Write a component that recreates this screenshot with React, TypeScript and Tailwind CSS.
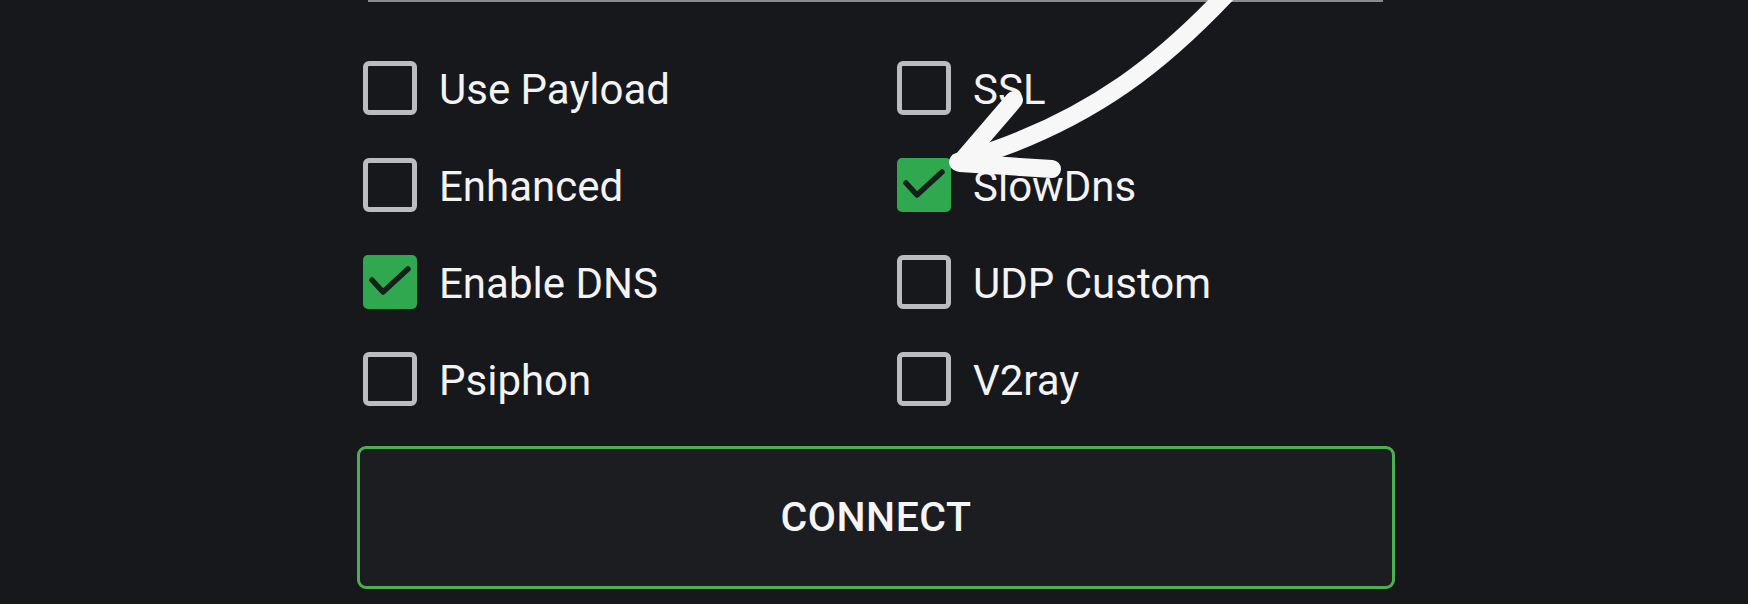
type Option = {
  label: string;
  checked: boolean;
};

const leftOptions: Option[] = [
  { label: "Use Payload", checked: false },
  { label: "Enhanced", checked: false },
  { label: "Enable DNS", checked: true },
  { label: "Psiphon", checked: false },
];

const rightOptions: Option[] = [
  { label: "SSL", checked: false },
  { label: "SlowDns", checked: true },
  { label: "UDP Custom", checked: false },
  { label: "V2ray", checked: false },
];

const CheckBox: React.FC<{ checked: boolean }> = ({ checked }) => {
  if (checked) {
    return (
      <div className="w-[54px] h-[54px] rounded-[5px] bg-[#2fa84f] shrink-0">
        <svg width="54" height="54" viewBox="0 0 54 54" fill="none">
          <path
            d="M9 25 L20 37 L45 14"
            stroke="#16201a"
            strokeWidth="5.5"
            strokeLinecap="round"
            strokeLinejoin="round"
          />
        </svg>
      </div>
    );
  }
  return (
    <div className="w-[54px] h-[54px] rounded-[6px] border-[5px] border-[#bcbcc0] bg-transparent shrink-0" />
  );
};

const OptionRow: React.FC<{ option: Option }> = ({ option }) => {
  return (
    <div className="flex items-center h-[54px]">
      <CheckBox checked={option.checked} />
      <span className="ml-[22px] mt-[4px] text-[42px] leading-none text-[#f3f3f3] whitespace-nowrap">
        {option.label}
      </span>
    </div>
  );
};

export default function App() {
  return (
    <div
      className="relative w-full h-[604px] bg-[#17181c] overflow-hidden"
      style={{ fontFamily: "Roboto, 'Noto Sans', sans-serif" }}
    >
      <div className="ml-[357px] w-[1038px]">
        {/* input underline */}
        <div className="ml-[11px] mr-[12px] h-[2px] bg-[#8c8c8e]" />

        <div className="mt-[59px] pl-[6px] grid grid-cols-[534px_1fr]">
          <div className="flex flex-col gap-[43px]">
            {leftOptions.map((o) => (
              <OptionRow key={o.label} option={o} />
            ))}
          </div>
          <div className="flex flex-col gap-[43px]">
            {rightOptions.map((o) => (
              <OptionRow key={o.label} option={o} />
            ))}
          </div>
        </div>

        <button className="mt-[40px] w-full h-[143px] rounded-[9px] border-[3px] border-[#4caf50] bg-[#1b1d21] flex items-center justify-center">
          <span className="text-[41px] font-medium text-[#f5f5f5] leading-none tracking-[0.5px]">
            CONNECT
          </span>
        </button>
      </div>

      {/* hand drawn arrow */}
      <svg
        className="absolute inset-0 pointer-events-none"
        width="1748"
        height="604"
        viewBox="0 0 1748 604"
        fill="none"
      >
        <path
          d="M1234 -14 C1170 55, 1095 122, 958 162"
          stroke="#f6f7f6"
          strokeWidth="18"
          strokeLinecap="round"
        />
        <path
          d="M1014 100 L960 163 L1052 169"
          stroke="#f6f7f6"
          strokeWidth="18"
          strokeLinecap="round"
          strokeLinejoin="round"
        />
      </svg>
    </div>
  );
}
